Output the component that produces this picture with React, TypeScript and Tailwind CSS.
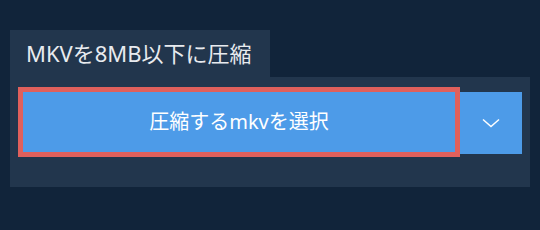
export default function App() {
  return (
    <div
      className="w-[540px] h-[230px] bg-[#11243a] pt-[30px] px-[10px]"
      style={{ fontFamily: '"Noto Sans", "Noto Sans CJK JP", sans-serif' }}
    >
      <div className="w-[260px] h-[47px] bg-[#22364d] pl-4 flex items-center">
        <span className="text-[22px] leading-none text-[#e8ebef] whitespace-nowrap -mt-[1px]">
          MKVを8MB以下に圧縮
        </span>
      </div>
      <div className="h-[110px] bg-[#22364d] pl-2 pt-[10px] flex items-start">
        <button className="w-[442px] h-[70px] border-[5px] border-[#e0605c] bg-[#4d9be8] flex items-center justify-center text-white text-[20px] leading-none">
          圧縮するmkvを選択
        </button>
        <button className="w-[62px] h-[62px] mt-[5px] bg-[#4d9be8] flex items-center justify-center">
          <svg width="18" height="10" viewBox="0 0 18 10" fill="none">
            <path d="M1 1.5 L9 8.5 L17 1.5" stroke="white" strokeWidth="1.5" />
          </svg>
        </button>
      </div>
    </div>
  );
}
